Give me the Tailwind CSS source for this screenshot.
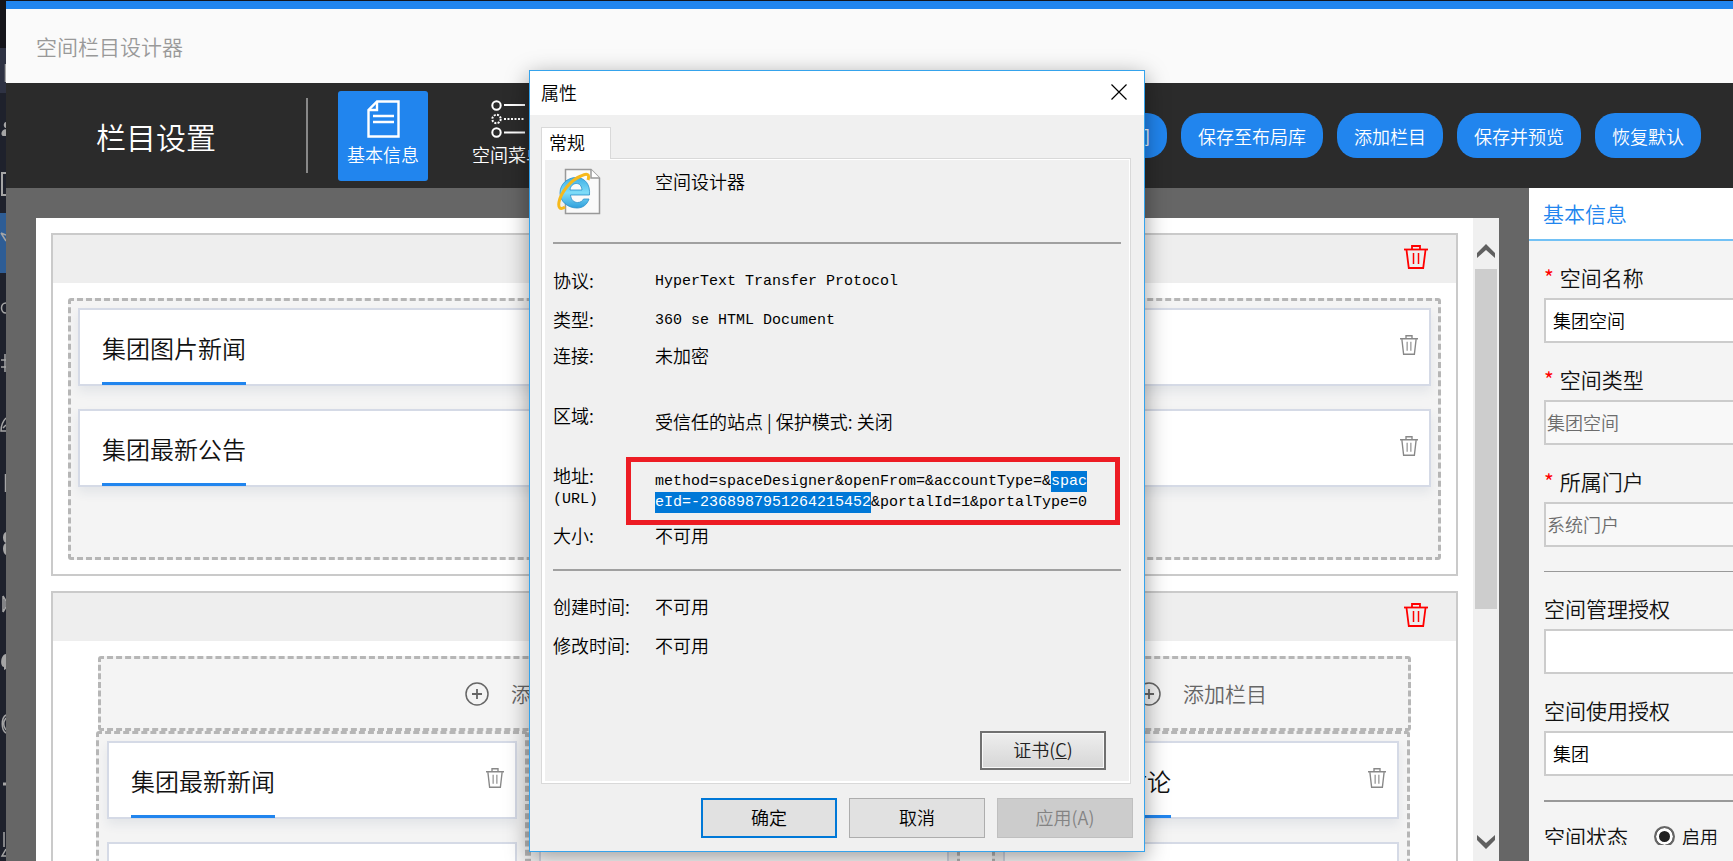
<!DOCTYPE html>
<html lang="zh-CN">
<head>
  <meta charset="UTF-8">
  <meta name="viewport" content="width=device-width, initial-scale=1.0">
  <title>空间栏目设计器</title>
  <script src="https://cdn.jsdelivr.net/npm/@tailwindcss/browser@4"></script>
</head>
<body class="relative flex h-screen overflow-hidden bg-[#15151b] font-['Noto_Sans_CJK_SC',sans-serif] font-[350] text-[#111]">

  <!-- icons -->
  <svg class="hidden">
    <symbol id="trash" viewBox="0 0 24 24" fill="none" stroke="currentColor">
      <path d="M0 4.500H24" stroke-width="1.800"/>
      <path d="M8 4V1H16V4" stroke-width="1.800"/>
      <path d="M2.500 5L4.800 23H19.200L21.500 5" stroke-width="1.800"/>
      <path d="M9.500 8V19M14.500 8V19" stroke-width="1.500"/>
    </symbol>
    <symbol id="plus" viewBox="0 0 24 24" fill="none" stroke="currentColor">
      <circle cx="12" cy="12" r="11" stroke-width="1.500"/>
      <path d="M12 7V17M7 12H17" stroke-width="1.800"/>
    </symbol>
  </svg>

  <!-- edge of the portal menu -->
  <nav class="w-1.5 shrink-0 overflow-hidden bg-[#1e212c]">
    <svg width="6" height="861" fill="none" stroke="#a5a5a5" stroke-width="1.500">
      <rect width="6" height="48" fill="#15151b" stroke="none"/>
      <rect y="48" width="6" height="45" fill="#2e3243" stroke="none"/>
      <rect y="213" width="6" height="60" fill="#2e5d95" stroke="none"/>
      <path d="M5.500 64V82"/>
      <path d="M6 122C3 122 3 128 6 128V136H3C1 136 0 130 6 129" fill="#a5a5a5" stroke="none"/>
      <path d="M6 173H2V195H6" stroke-width="2"/>
      <path d="M1 233L6 235M1 233L6 241"/>
      <path d="M6 303C0 303 0 313 6 313"/>
      <path d="M5 354V372M1 360H6M1 367H6"/>
      <path d="M6 418C3 421 1 425 1 431H6M3 428L6 425"/>
      <path d="M5.500 474V492"/>
      <path d="M6 532C2 533 2 542 6 543C2 544 2 553 6 555" fill="#a5a5a5" stroke="none"/>
      <path d="M3 596V612M3 596L6 601M3 612L6 607M5 600V608"/>
      <path d="M6 654C0 655 0 667 4 667V670L6 669" fill="#a5a5a5" stroke="none"/>
      <path d="M6 715C1 718 1 730 6 733M6 718C3 722 3 726 6 730"/>
      <path d="M3 784H6" stroke-width="3"/>
      <path d="M4 832V847M6 849L2 856H6"/>
    </svg>
  </nav>

  <main class="mt-px flex min-w-0 flex-1 flex-col border-t-8 border-[#2185ee]">
    <header class="flex h-[74px] shrink-0 items-center bg-[#fafafa] pl-[30px]">
      <h1 class="text-[21px] leading-7 text-[#999]">空间栏目设计器</h1>
    </header>

    <div class="flex h-[105px] shrink-0 items-center bg-[#2b2b2b] pr-8 pl-[90px] text-white">
      <h2 class="w-[210px] text-[30px] leading-10">栏目设置</h2>
      <div class="h-[75px] w-0.5 bg-[#888]"></div>
      <button class="ml-[30px] flex size-[90px] flex-col items-center rounded-[3px] bg-[#2185ee] pt-[9px] text-lg leading-8">
        <svg class="w-[33px] shrink-0" height="38" viewBox="0 0 33 38" fill="none" stroke="#fff" stroke-width="2.400">
          <path d="M10 1.500H31.500V36.500H1.500V10Z"/>
          <path d="M10 2V10H2"/>
          <path d="M6 16H27M6 22H27"/>
        </svg>
        基本信息
      </button>
      <button class="ml-[35px] flex size-[90px] flex-col items-center pt-[9px] text-lg leading-8">
        <svg class="w-[34px] shrink-0" height="38" viewBox="0 0 34 38" fill="none" stroke="#fff" stroke-width="2">
          <circle cx="5.500" cy="5.500" r="4.200"/>
          <circle cx="5.500" cy="19" r="4.200" stroke-dasharray="2 1.300"/>
          <circle cx="5.500" cy="32.500" r="4.200"/>
          <path d="M13 5H34M13 32.500H34"/>
          <path d="M13 19H34" stroke-dasharray="2 1.500"/>
        </svg>
        空间菜单
      </button>
      <div class="ml-auto flex gap-3.5 text-lg">
        <button class="h-[45px] rounded-[20px] bg-[#2185ee] px-[17px]">保存空间</button>
        <button class="h-[45px] rounded-[20px] bg-[#2185ee] px-[17px]">保存至布局库</button>
        <button class="h-[45px] rounded-[20px] bg-[#2185ee] px-[17px]">添加栏目</button>
        <button class="h-[45px] rounded-[20px] bg-[#2185ee] px-[17px]">保存并预览</button>
        <button class="h-[45px] rounded-[20px] bg-[#2185ee] px-[17px]">恢复默认</button>
      </div>
    </div>

    <div class="flex min-h-0 flex-1 bg-[#666]">
      <!-- layout canvas -->
      <div class="flex min-w-0 flex-1 overflow-hidden px-[30px] pt-[30px]">
        <div class="flex min-w-0 flex-1 flex-col gap-[15px] overflow-hidden bg-white p-[15px]">
          <section class="shrink-0 border-2 border-[#cacaca]">
            <div class="flex h-12 justify-end bg-[#eee] pt-2.5 pr-7">
              <button class="size-6 text-[#f00]" aria-label="删除"><svg class="size-6"><use href="#trash"/></svg></button>
            </div>
            <div class="p-[15px] pb-3.5">
              <div class="flex h-[262px] flex-col gap-[23px] rounded-[3px] border-3 border-dashed border-[#b6b6b6] bg-[#f4f4f4] p-[7px]">
                <article class="flex h-[78px] items-center justify-between border-2 border-[#d5dae6] bg-white pr-[11px] pl-[22px] shadow-[0_6px_10px_rgba(40,60,100,0.08)]">
                  <h3 class="-mb-px h-[75px] border-b-3 border-[#2185ee] pt-1 text-2xl leading-[68px]">集团图片新闻</h3>
                  <button class="mb-1 text-[#888]" aria-label="删除"><svg class="h-5 w-[18px]" viewBox="0 0 24 24" preserveAspectRatio="none"><use href="#trash"/></svg></button>
                </article>
                <article class="flex h-[78px] items-center justify-between border-2 border-[#d5dae6] bg-white pr-[11px] pl-[22px] shadow-[0_6px_10px_rgba(40,60,100,0.08)]">
                  <h3 class="-mb-px h-[75px] border-b-3 border-[#2185ee] pt-1 text-2xl leading-[68px]">集团最新公告</h3>
                  <button class="mb-1 text-[#888]" aria-label="删除"><svg class="h-5 w-[18px]" viewBox="0 0 24 24" preserveAspectRatio="none"><use href="#trash"/></svg></button>
                </article>
              </div>
            </div>
          </section>

          <section class="shrink-0 border-2 border-[#cacaca]">
            <div class="flex h-12 justify-end bg-[#eee] pt-2.5 pr-7">
              <button class="size-6 text-[#f00]" aria-label="删除"><svg class="size-6"><use href="#trash"/></svg></button>
            </div>
            <div class="grid grid-cols-[864fr_418fr] gap-x-[31px] px-[45px] pt-[15px] text-[21px] text-[#666]">
              <button class="flex h-[75px] items-center justify-center gap-[22px] rounded-[3px] border-3 border-dashed border-[#b6b6b6] bg-[#f4f4f4]">
                <svg class="size-6"><use href="#plus"/></svg>添加栏目
              </button>
              <button class="flex h-[75px] items-center justify-center gap-[22px] rounded-[3px] border-3 border-dashed border-[#b6b6b6] bg-[#f4f4f4]">
                <svg class="size-6"><use href="#plus"/></svg>添加栏目
              </button>
            </div>
            <div class="grid grid-cols-[864fr_418fr] gap-x-8 pr-[46px] pl-[43px]">
              <div class="grid grid-cols-2">
                <div class="flex h-[280px] flex-col gap-[23px] rounded-[3px] border-3 border-dashed border-[#b6b6b6] bg-[#f4f4f4] px-2 py-[7px]">
                  <article class="flex h-[78px] items-center justify-between border-2 border-[#d5dae6] bg-white pr-[11px] pl-[22px] shadow-[0_6px_10px_rgba(40,60,100,0.08)]">
                    <h3 class="-mb-px h-[75px] border-b-3 border-[#2185ee] pt-1 text-2xl leading-[68px]">集团最新新闻</h3>
                    <button class="mb-1 text-[#888]" aria-label="删除"><svg class="h-5 w-[18px]" viewBox="0 0 24 24" preserveAspectRatio="none"><use href="#trash"/></svg></button>
                  </article>
                  <article class="h-[78px] border-2 border-[#d5dae6] bg-white"></article>
                </div>
                <div class="flex h-[280px] flex-col gap-[23px] rounded-[3px] border-3 border-dashed border-[#b6b6b6] bg-[#f4f4f4] px-2 py-[7px]">
                  <article class="h-[78px] border-2 border-[#d5dae6] bg-white"></article>
                  <article class="h-[78px] border-2 border-[#d5dae6] bg-white"></article>
                </div>
              </div>
              <div class="flex h-[280px] flex-col gap-[23px] rounded-[3px] border-3 border-dashed border-[#b6b6b6] bg-[#f4f4f4] px-2 py-[7px]">
                <article class="flex h-[78px] items-center justify-between border-2 border-[#d5dae6] bg-white pr-[11px] pl-[22px] shadow-[0_6px_10px_rgba(40,60,100,0.08)]">
                  <h3 class="-mb-px h-[75px] border-b-3 border-[#2185ee] pt-1 text-2xl leading-[68px]">集团最新讨论</h3>
                  <button class="mb-1 text-[#888]" aria-label="删除"><svg class="h-5 w-[18px]" viewBox="0 0 24 24" preserveAspectRatio="none"><use href="#trash"/></svg></button>
                </article>
                <article class="h-[78px] border-2 border-[#d5dae6] bg-white"></article>
              </div>
            </div>
          </section>
        </div>

        <!-- scroll bar -->
        <div class="flex w-[26px] shrink-0 flex-col items-center bg-[#f0f0f0] pt-[26px] pb-3">
          <svg class="shrink-0" width="18" height="14" fill="#606060"><path d="M9 0L18 9V14L9 6L0 14V9Z"/></svg>
          <div class="mt-[11px] h-[340px] w-[22px] bg-[#cdcdcd]"></div>
          <svg class="mt-auto shrink-0" width="18" height="14" fill="#606060"><path d="M9 14L18 5V0L9 8L0 0V5Z"/></svg>
        </div>
      </div>

      <!-- settings -->
      <aside class="flex w-51 shrink-0 flex-col overflow-hidden bg-[#f4f4f4] pb-4">
        <h2 class="h-[53px] shrink-0 border-b-2 border-[#72c1f5] bg-white pl-3.5 text-[21px] leading-[51px] text-[#2185ee]">基本信息</h2>
        <form class="min-h-0 flex-1 overflow-hidden pl-[15px] text-[21px] leading-7 whitespace-nowrap">
          <div class="mt-[22px]">
            <label for="name"><span class="mr-1.5 font-normal text-[#f00]">*</span>空间名称</label>
            <input id="name" value="集团空间" class="mt-[7px] block h-[45px] w-[220px] border-2 border-[#ccc] bg-white px-[7px] pb-0.5 text-lg text-black">
          </div>
          <div class="mt-[22px]">
            <label for="type"><span class="mr-1.5 font-normal text-[#f00]">*</span>空间类型</label>
            <input id="type" value="集团空间" disabled class="mt-[7px] block h-[45px] w-[220px] border-2 border-[#ccc] bg-[#f8f8f8] px-px pb-0.5 text-lg text-[#6d6d6d]">
          </div>
          <div class="mt-[22px]">
            <label for="portal"><span class="mr-1.5 font-normal text-[#f00]">*</span>所属门户</label>
            <input id="portal" value="系统门户" disabled class="mt-[7px] block h-[45px] w-[220px] border-2 border-[#ccc] bg-[#f8f8f8] px-px pb-0.5 text-lg text-[#6d6d6d]">
          </div>
          <hr class="mt-6 border-t border-[#999]">
          <div class="mt-[22px]">
            <label for="manage">空间管理授权</label>
            <input id="manage" class="mt-[7px] block h-[45px] w-[220px] border-2 border-[#ccc] bg-white px-[7px] pb-0.5 text-lg text-black">
          </div>
          <div class="mt-[22px]">
            <label for="use">空间使用授权</label>
            <input id="use" value="集团" class="mt-[7px] block h-[45px] w-[220px] border-2 border-[#ccc] bg-white px-[7px] pb-0.5 text-lg text-black">
          </div>
          <hr class="mt-6 border-t-2 border-[#999]">
          <div class="mt-5 flex items-center">
            <span>空间状态</span>
            <input type="radio" id="enabled" name="status" checked class="ml-[26px] size-[21px] appearance-none rounded-full border-2 border-[#666] bg-[#222] shadow-[inset_0_0_0_3px_#fff]">
            <label for="enabled" class="ml-[7px] text-lg leading-7">启用</label>
          </div>
        </form>
      </aside>
    </div>
  </main>

  <!-- properties dialog -->
  <div role="dialog" aria-label="属性" class="absolute top-[70px] left-[529px] w-[616px] border border-[#35a3ec] bg-[#f0f0f0] text-lg leading-5 text-black shadow-[0_6px_22px_rgba(0,0,0,0.4)]">
    <div class="flex h-11 items-center justify-between bg-white pr-[17px] pb-0.5 pl-[11px]">
      <span>属性</span>
      <button aria-label="关闭"><svg width="16" height="16" stroke="#000" stroke-width="1.200"><path d="M0.500 0.500L15.500 15.500M15.500 0.500L0.500 15.500"/></svg></button>
    </div>
    <div class="px-[11px] pt-3 pb-[13px]">
      <button class="relative -mb-px block h-8 w-[70px] border border-b-0 border-[#d9d9d9] bg-white pb-1 pl-[7px] text-left">常规</button>
      <div class="mr-0.5 border border-[#d9d9d9] bg-white pt-px pr-px pb-0.5 pl-[3px]">
        <div class="bg-[#f0f0f0] pr-2 pb-[11px] pl-2">
          <div class="flex h-[82px] pt-2">
            <svg class="ml-1 w-[98px] shrink-0" height="47" viewBox="0 0 98 47">
              <defs>
                <linearGradient id="ie" x1="0" y1="0" x2="0" y2="1">
                  <stop offset="0" stop-color="#3fb0e6"/>
                  <stop offset="0.500" stop-color="#7fdcf8"/>
                  <stop offset="1" stop-color="#2f9fdc"/>
                </linearGradient>
              </defs>
              <path d="M8.500 1.500H34L42.500 10V45.500H8.500Z" fill="#fafafa" stroke="#999" stroke-width="1.500"/>
              <path d="M34 1.500V10H42.500" fill="#fff" stroke="#999" stroke-width="1.500"/>
              <path d="M32.500 27H13.500C14 32 17 34.500 20.500 34.500C23.500 34.500 25.500 33 26.500 31H32C30 37 25.500 40 20 40C11.500 40 3 34 3 25C3 16 10.500 9.500 19 9.500C28 9.500 33.500 16.500 32.500 27ZM13 22H25C24.500 17.500 22.500 15.500 19.300 15.500C16 15.500 13.500 18 13 22Z" fill="url(#ie)" stroke="#2b8fc9" stroke-width="0.800"/>
              <path d="M31 12C33 6 30 5 24 8C14 12 4 24 2 34C1 40 3 42 8 39" fill="none" stroke="#f6b91c" stroke-width="3"/>
            </svg>
            <span class="leading-[26px]">空间设计器</span>
          </div>
          <hr class="border-t-2 border-[#a0a0a0]">
          <dl class="grid grid-cols-[102px_1fr] pt-[26px]">
            <dt class="h-[39px]">协议:</dt>
            <dd class="font-['Liberation_Mono',monospace] text-[15px] leading-6">HyperText Transfer Protocol</dd>
            <dt class="h-9">类型:</dt>
            <dd class="font-['Liberation_Mono',monospace] text-[15px] leading-6">360 se HTML Document</dd>
            <dt class="h-[60px]">连接:</dt>
            <dd>未加密</dd>
            <dt class="h-[60px]">区域:</dt>
            <dd class="pt-1.5">受信任的站点 | 保护模式: 关闭</dd>
            <dt class="h-[60px]">地址:<br><span class="font-['Liberation_Mono',monospace] text-[15px]">(URL)</span></dt>
            <dd class="relative self-start pt-1.5 font-['Liberation_Mono',monospace] text-[15px] leading-[21px] whitespace-nowrap">
              method=spaceDesigner&amp;openFrom=&amp;accountType=&amp;<mark class="bg-[#0078d7] py-0.5 text-white">spac<br>eId=-2368987951264215452</mark>&amp;portalId=1&amp;portalType=0
              <span class="absolute -top-2 -left-[29px] h-[68px] w-[494px] border-5 border-[#ed1c24]"></span>
            </dd>
            <dt class="h-[44px]">大小:</dt>
            <dd>不可用</dd>
          </dl>
          <hr class="border-t-2 border-[#a0a0a0]">
          <dl class="grid grid-cols-[102px_1fr] pt-[25px]">
            <dt class="h-[39px]">创建时间:</dt>
            <dd>不可用</dd>
            <dt class="h-[39px]">修改时间:</dt>
            <dd>不可用</dd>
          </dl>
          <div class="flex justify-end pt-[57px] pr-[15px]">
            <button class="h-[39px] w-[126px] border-2 border-[#707070] bg-linear-to-b from-[#eee] to-[#d6d6d6] pb-1 text-[#222] shadow-[inset_0_0_0_1px_#f8f8f8]">证书(<u>C</u>)</button>
          </div>
        </div>
      </div>
      <div class="mt-3.5 flex justify-end gap-3">
        <button class="h-10 w-[136px] border-2 border-[#0078d7] bg-[#e1e1e1] pb-0.5">确定</button>
        <button class="h-10 w-[136px] border border-[#adadad] bg-[#e1e1e1] pb-0.5">取消</button>
        <button disabled class="h-10 w-[136px] border border-[#bfbfbf] bg-[#ccc] pb-0.5 text-[#838383]">应用(A)</button>
      </div>
    </div>
  </div>
</body>
</html>
